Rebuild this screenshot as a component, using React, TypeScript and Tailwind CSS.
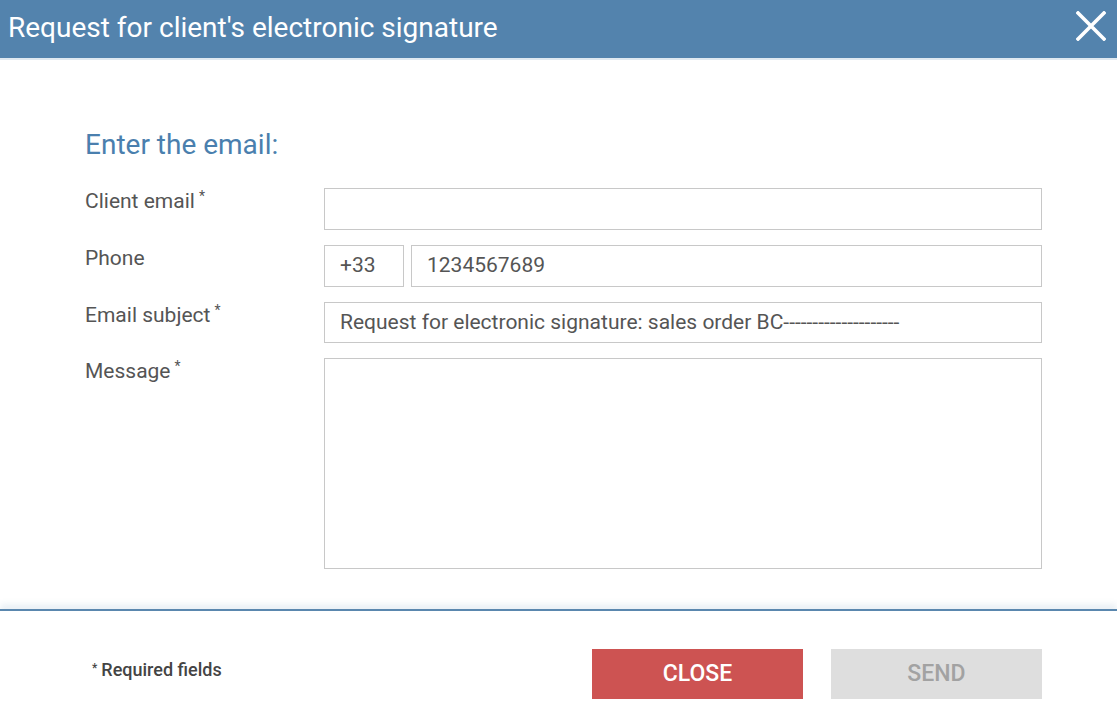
import React from 'react'

const font = { fontFamily: 'Roboto, "Liberation Sans", sans-serif' }

function Label({ text, required }: { text: string; required?: boolean }) {
  return (
    <div className="text-[21px] leading-[26px] text-[#555555]">
      {text}
      {required && <sup className="ml-[4px] text-[14px] relative -top-[7px]">*</sup>}
    </div>
  )
}

export default function App() {
  return (
    <div className="w-[1117px] h-[722px] bg-white flex flex-col overflow-hidden" style={font}>
      <header className="h-[60px] shrink-0 bg-[#5383ad] border-b-2 border-[#dfe9f1] flex items-center justify-between pl-[8px] pr-[11px]">
        <h1 className="text-[28px] text-white leading-none -mt-[2px]">Request for client's electronic signature</h1>
        <svg width="30" height="30" viewBox="0 0 30 30" className="-mt-[6px]">
          <path d="M2 2 L28 28 M28 2 L2 28" stroke="white" strokeWidth="3.6" strokeLinecap="square" />
        </svg>
      </header>

      <main className="flex-1 pl-[85px] pr-[75px] pt-[68px]">
        <h2 className="text-[28px] leading-[34px] text-[#4a7fae] mb-[26px]">Enter the email:</h2>
        <div className="grid grid-cols-[239px_1fr] gap-y-[15px]">
          <Label text="Client email" required />
          <div className="h-[42px] border border-[#c8c8c8]" />

          <Label text="Phone" />
          <div className="flex gap-[7px]">
            <div className="w-[80px] h-[42px] border border-[#c8c8c8] flex items-center pl-[15px] text-[21px] text-[#555555]">+33</div>
            <div className="flex-1 h-[42px] border border-[#c8c8c8] flex items-center pl-[15px] text-[21px] text-[#555555]">1234567689</div>
          </div>

          <Label text="Email subject" required />
          <div className="h-[41px] border border-[#c8c8c8] flex items-center pl-[15px] text-[21px] text-[#555555]">
            Request for electronic signature: sales order BC--------------------
          </div>

          <Label text="Message" required />
          <div className="h-[211px] border border-[#c8c8c8]" />
        </div>
      </main>

      <footer className="h-[113px] shrink-0 border-t-2 border-[#5a87ae] shadow-[0_-5px_6px_rgba(83,131,173,0.12)] flex items-start pl-[92px] pr-[75px] pt-[38px]">
        <div className="flex-1 pt-[7px] text-[18px] font-medium text-[#444444]">
          <sup className="text-[12px] mr-[4px] relative -top-[4px]">*</sup>Required fields
        </div>
        <button className="w-[211px] h-[50px] bg-[#cd5352] text-white text-[23px] font-medium">CLOSE</button>
        <button className="w-[211px] h-[50px] ml-[28px] bg-[#dedede] text-[#a2a2a2] text-[23px] font-medium">SEND</button>
      </footer>
    </div>
  )
}
